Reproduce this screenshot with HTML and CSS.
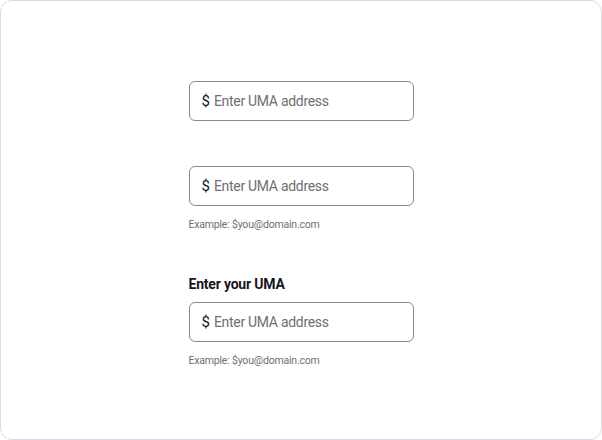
FILE: index.html
```html
<!DOCTYPE html>
<html lang="en">
<head>
    <meta charset="UTF-8">
    <meta name="viewport" content="width=device-width, initial-scale=1.0">
    <title>UMA input</title>
    <link rel="stylesheet" href="styles.css">
</head>
<body>
    <div class="frame">
        <div class="stack">
            <div class="field">
                <label class="uma-input">
                    <span class="prefix">$</span>
                    <input type="text" placeholder="Enter UMA address">
                </label>
            </div>

            <div class="field">
                <label class="uma-input">
                    <span class="prefix">$</span>
                    <input type="text" placeholder="Enter UMA address">
                </label>
                <p class="hint">Example: $you@domain.com</p>
            </div>

            <div class="field field-labelled">
                <div class="field-label">Enter your UMA</div>
                <label class="uma-input">
                    <span class="prefix">$</span>
                    <input type="text" placeholder="Enter UMA address">
                </label>
                <p class="hint">Example: $you@domain.com</p>
            </div>
        </div>
    </div>
</body>
</html>
```

FILE: styles.css
```css
body {
    margin: 0;
    background-color: #fff;
    font-family: Roboto, 'Noto Sans', sans-serif;
    color: #16161d;
}
.frame {
    width: 602px;
    height: 440px;
    box-sizing: border-box;
    border: 1px solid #dcd8e4;
    border-radius: 12px;
    background-color: #fff;
    display: flex;
    justify-content: center;
}
.stack {
    width: 225px;
    padding-top: 80px;
    display: flex;
    flex-direction: column;
    gap: 45px;
}
.field {
    display: flex;
    flex-direction: column;
}
.field-labelled {
    margin-top: -4px;
}
.field-label {
    font-size: 14px;
    font-weight: 700;
    line-height: 20px;
    margin-bottom: 8px;
    letter-spacing: -0.2px;
}
.uma-input {
    display: flex;
    align-items: center;
    gap: 4px;
    height: 40px;
    box-sizing: border-box;
    border: 1px solid #8a8a8e;
    border-radius: 6px;
    padding: 0 12px;
}
.prefix {
    font-size: 15px;
    color: #16161d;
}
.uma-input input {
    border: none;
    outline: none;
    padding: 0;
    flex: 1;
    min-width: 0;
    font-family: inherit;
    font-size: 14px;
    letter-spacing: -0.3px;
    color: #16161d;
    background: transparent;
}
.uma-input input::placeholder {
    color: #6e6e73;
}
.hint {
    margin: 11px 0 0;
    font-size: 10.5px;
    line-height: 16px;
    letter-spacing: -0.2px;
    color: #6e6e73;
}
```
